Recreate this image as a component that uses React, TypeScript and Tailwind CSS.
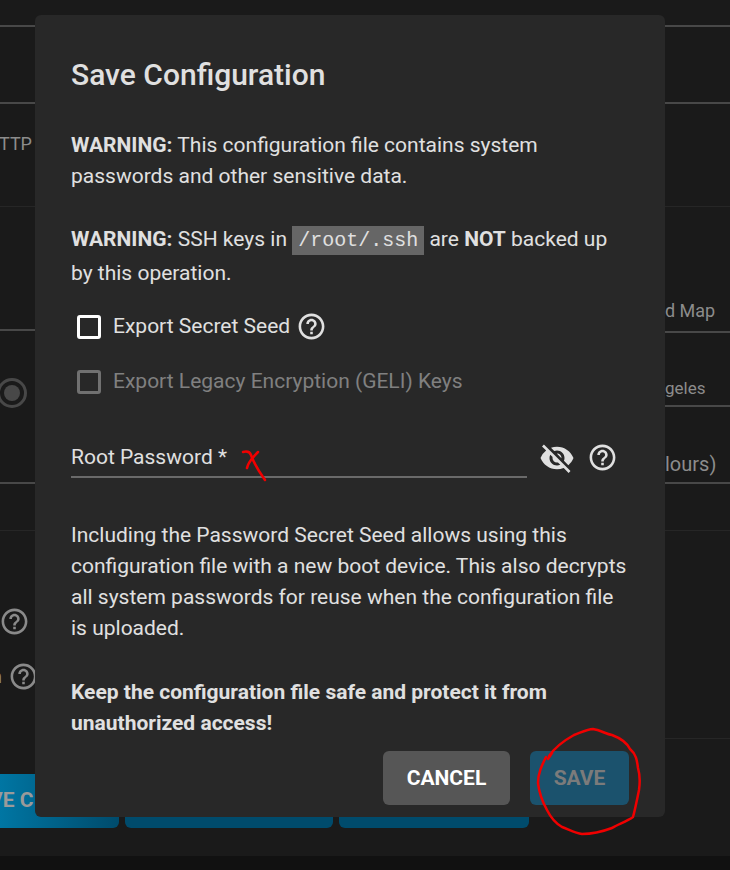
import { MdHelpOutline, MdVisibilityOff } from 'react-icons/md'

export default function App() {
    return (
        <div className="relative h-[870px] w-[730px] overflow-hidden bg-[#1a1a1a] font-['Roboto',sans-serif] text-[21px] text-[#8c8c8c]">
            {/* Page behind the dialog */}
            <div className="flex h-[739px] justify-between">
                <div className="flex w-[35px] flex-col">
                    <div className="h-[27px] shrink-0 border-b-2 border-[#484848]" />
                    <div className="h-[77px] shrink-0 border-b-2 border-[#484848]" />
                    <div className="h-[103px] shrink-0 overflow-hidden border-b border-[#262626] pt-[27px] text-[18px] leading-[26px]">
                        <div className="-ml-[1px]">TTP</div>
                    </div>
                    <div className="h-[124px] shrink-0 border-b-2 border-[#484848]" />
                    <div className="h-[153px] shrink-0 overflow-hidden border-b-2 border-[#484848] pt-[47px]">
                        <div className="-ml-[3px] flex h-[30px] w-[30px] items-center justify-center rounded-full border-[3px] border-[#484848]">
                            <div className="h-[16px] w-[16px] rounded-full bg-[#484848]" />
                        </div>
                    </div>
                    <div className="h-[47px] shrink-0 border-b border-[#262626]" />
                    <div className="flex h-[208px] shrink-0 flex-col overflow-hidden">
                        <MdHelpOutline className="mt-[75px] ml-[-1px] shrink-0 text-[#8a8a8a]" size={31} />
                        <div className="mt-[24px] flex items-center">
                            <span className="ml-[-8px] w-[16px] shrink-0 text-[18px] leading-[31px]">n</span>
                            <MdHelpOutline className="shrink-0 text-[#8a8a8a]" size={31} />
                        </div>
                    </div>
                </div>
                <div className="flex w-[65px] flex-col text-[18px] leading-[26px]">
                    <div className="h-[27px] shrink-0 border-b-2 border-[#484848]" />
                    <div className="h-[77px] shrink-0 border-b-2 border-[#484848]" />
                    <div className="h-[103px] shrink-0 border-b border-[#262626]" />
                    <div className="h-[126px] shrink-0 overflow-hidden border-b-2 border-[#484848] pt-[91px]">
                        <div className="whitespace-nowrap">d Map</div>
                    </div>
                    <div className="h-[74px] shrink-0 overflow-hidden border-b-2 border-[#484848] pt-[42px] text-[17px]">
                        <div className="whitespace-nowrap">geles</div>
                    </div>
                    <div className="h-[77px] shrink-0 overflow-hidden border-b-2 border-[#484848] pt-[44px] text-[20px]">
                        <div className="whitespace-nowrap">lours)</div>
                    </div>
                    <div className="h-[47px] shrink-0 border-b border-[#262626]" />
                    <div className="h-[208px] shrink-0 border-b border-[#262626]" />
                </div>
            </div>
            <div className="mt-[35px] flex h-[54px] gap-[6px]">
                <div className="flex w-[119px] shrink-0 items-center overflow-hidden rounded-br-[6px] bg-gradient-to-r from-[#0076a3] to-[#004b6c] text-[21px] font-bold whitespace-nowrap text-[#9a9a9a]">
                    <span className="-ml-[11px]">VE C</span>
                </div>
                <div className="w-[208px] shrink-0 rounded-b-[6px] bg-[#004b6c]" />
                <div className="w-[190px] shrink-0 rounded-b-[6px] bg-[#004b6c]" />
            </div>
            <div className="mt-[28px] h-[14px] bg-[#111111]" />

            {/* Dialog */}
            <div className="absolute top-[15px] left-[35px] flex h-[802px] w-[630px] flex-col rounded-[6px] bg-[#282828] px-[36px] pt-[40px] leading-[31px] text-[#e0e0e0]">
                <h2 className="text-[30px] leading-[40px] font-medium">Save Configuration</h2>
                <p className="mt-[35px]">
                    <strong className="font-bold">WARNING:</strong> This configuration file contains system passwords and other sensitive data.
                </p>
                <p className="mt-[31px] leading-[33px]">
                    <strong className="font-bold">WARNING:</strong> SSH keys in{' '}
                    <code className="bg-[#666666] px-[6px] py-[3px] font-['Liberation_Mono',monospace] text-[20px]">/root/.ssh</code> are{' '}
                    <strong className="font-bold">NOT</strong> backed up by this operation.
                </p>
                <div className="mt-[21px] flex items-center pl-[6px]">
                    <div className="h-[24px] w-[24px] rounded-[3px] border-[3px] border-white" />
                    <span className="ml-[12px]">Export Secret Seed</span>
                    <MdHelpOutline className="ml-[6px]" size={31} />
                </div>
                <div className="mt-[24px] flex items-center pl-[6px] text-[#808080]">
                    <div className="h-[24px] w-[24px] rounded-[3px] border-[3px] border-[#717171]" />
                    <span className="ml-[12px]">Export Legacy Encryption (GELI) Keys</span>
                </div>
                <div className="mt-[45px] flex items-start">
                    <div className="h-[36px] w-[456px] border-b-2 border-[#6a6a6a]">Root Password *</div>
                    <MdVisibilityOff className="mt-[-2px] ml-[12px]" size={36} />
                    <MdHelpOutline className="ml-[12px]" size={31} />
                </div>
                <p className="mt-[42px]">
                    Including the Password Secret Seed allows using this configuration file with a new boot device. This also decrypts all system passwords for reuse when the configuration file is uploaded.
                </p>
                <p className="mt-[33px] font-bold">Keep the configuration file safe and protect it from unauthorized access!</p>
                <div className="mt-[12px] flex justify-end gap-[20px] pr-0">
                    <button className="h-[54px] w-[127px] rounded-[6px] bg-[#565656] font-bold text-white">CANCEL</button>
                    <button className="h-[54px] w-[99px] rounded-[6px] bg-[#1b526d] font-bold text-[#7b7b7b]">SAVE</button>
                </div>
            </div>

            {/* Red pen marks on top of the screenshot */}
            <svg className="absolute inset-0" width="730" height="870" fill="none" stroke="#f00000" strokeWidth="2.5" strokeLinecap="round" strokeLinejoin="round">
                <path d="M243 452 C247 451 250 452 251 455 C253 461 256 466 259 471 L265 480" />
                <path d="M258 452 C254 456 250 460 248 465 L247 468" />
                <path d="M548 759 L552 753 L549 756 C556 746 565 740 574 735 C582 732 588 729 593 729 C600 730 606 734 612 735 C620 738 627 743 630 749 C636 754 637 760 638 768 C640 775 640 783 639 790 C637 800 635 810 633 817 C626 822 618 824 612 828 C604 831 592 834 582 834 C575 833 568 829 562 827 C555 823 550 816 547 810 C542 801 539 792 538 783 C538 773 542 765 546 757" />
            </svg>
        </div>
    )
}
